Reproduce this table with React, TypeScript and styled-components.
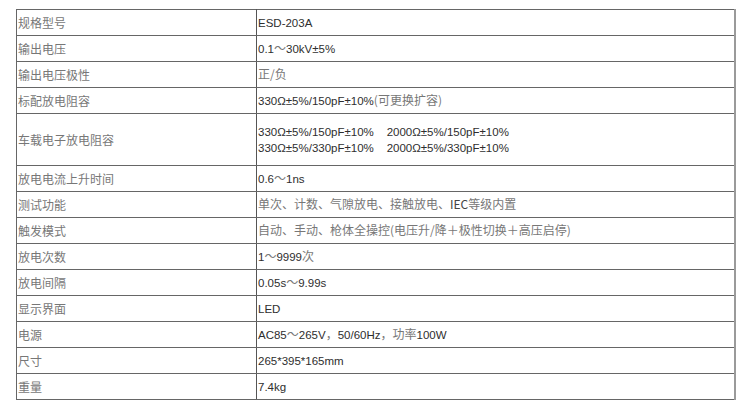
import React from 'react'
import styled, { createGlobalStyle } from 'styled-components'

const GlobalStyle = createGlobalStyle`
  html, body {
    margin: 0;
    padding: 0;
    background: #ffffff;
  }
`

const Page = styled.div`
  padding: 9px 0 0 16px;
  width: 750px;
  height: 412px;
  box-sizing: border-box;
  font-family: 'Liberation Sans', 'Noto Sans CJK SC', sans-serif;
  font-size: 11.5px;
  color: #2e2e2e;
`

const SpecTable = styled.table`
  width: 720px;
  border-collapse: collapse;
  table-layout: fixed;
  border-right: 2px solid #9a9a9a;
`

const Row = styled.tr<{ tall?: boolean }>`
  height: ${({ tall }) => (tall ? '52px' : '26px')};
`

const Label = styled.td`
  width: 237px;
  border: 1px solid #666;
  border-right: 1px solid #555;
  padding: 0 1px;
  vertical-align: middle;
  font-size: 12px;
  color: #777;
`

const Value = styled.td`
  border-top: 1px solid #666;
  border-bottom: 1px solid #666;
  padding: 0 1px;
  vertical-align: middle;
  line-height: 16px;
`

const Zh = styled.span<{ dark?: boolean }>`
  font-family: 'Noto Sans CJK SC', sans-serif;
  font-size: 12px;
  color: ${({ dark }) => (dark ? '#444' : '#777')};
`

interface ISpec {
  name: string
  value: React.ReactNode
  tall?: boolean
}

const specs: ISpec[] = [
  { name: '规格型号', value: 'ESD-203A' },
  { name: '输出电压', value: <>0.1<Zh>～</Zh>30kV±5%</> },
  { name: '输出电压极性', value: <Zh>正/负</Zh> },
  { name: '标配放电阻容', value: <>330Ω±5%/150pF±10%<Zh>(可更换扩容)</Zh></> },
  {
    name: '车载电子放电阻容',
    tall: true,
    value: (
      <>
        330Ω±5%/150pF±10%&nbsp;&nbsp;&nbsp;&nbsp;2000Ω±5%/150pF±10%
        <br />
        330Ω±5%/330pF±10%&nbsp;&nbsp;&nbsp;&nbsp;2000Ω±5%/330pF±10%
      </>
    )
  },
  { name: '放电电流上升时间', value: <>0.6<Zh>～</Zh>1ns</> },
  { name: '测试功能', value: <Zh>单次、计数、气隙放电、接触放电、<Zh dark>IEC</Zh>等级内置</Zh> },
  { name: '触发模式', value: <Zh>自动、手动、枪体全操控(电压升/降＋极性切换＋高压启停)</Zh> },
  { name: '放电次数', value: <>1<Zh>～</Zh>9999<Zh>次</Zh></> },
  { name: '放电间隔', value: <>0.05s<Zh>～</Zh>9.99s</> },
  { name: '显示界面', value: 'LED' },
  { name: '电源', value: <>AC85<Zh>～</Zh>265V<Zh>，</Zh>50/60Hz<Zh>，功率</Zh>100W</> },
  { name: '尺寸', value: '265*395*165mm' },
  { name: '重量', value: '7.4kg' }
]

const App: React.FC = () => (
  <>
    <GlobalStyle />
    <Page>
      <SpecTable>
        <tbody>
          {specs.map((spec) => (
            <Row key={spec.name} tall={spec.tall}>
              <Label>{spec.name}</Label>
              <Value>{spec.value}</Value>
            </Row>
          ))}
        </tbody>
      </SpecTable>
    </Page>
  </>
)

export default App
